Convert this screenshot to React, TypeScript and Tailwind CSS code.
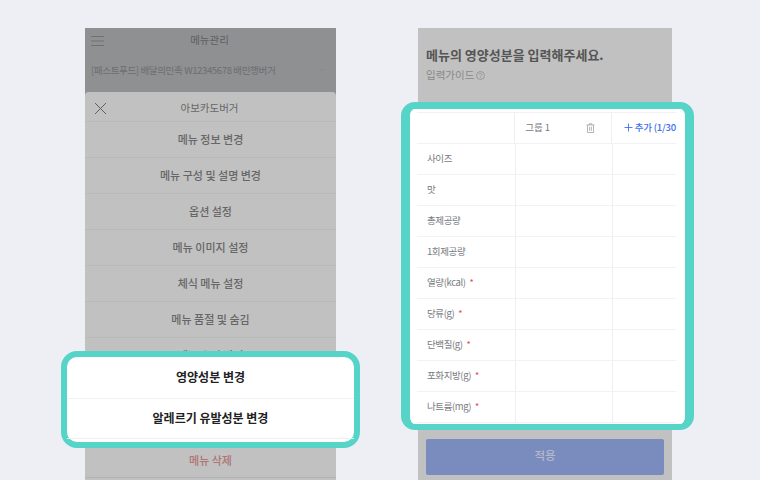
import React from "react";

const FONT = "font-['Noto_Sans_CJK_KR','Noto_Sans',sans-serif]";

const menuRows = [
  "메뉴 정보 변경",
  "메뉴 구성 및 설명 변경",
  "옵션 설정",
  "메뉴 이미지 설정",
  "체식 메뉴 설정",
  "메뉴 품절 및 숨김",
  "메뉴 순서 변경"
];

const nutritionRows = [
  { label: "사이즈" },
  { label: "맛" },
  { label: "총제공량" },
  { label: "1회제공량" },
  { label: "열량(kcal)", required: true },
  { label: "당류(g)", required: true },
  { label: "단백질(g)", required: true },
  { label: "포화지방(g)", required: true },
  { label: "나트륨(mg)", required: true }
];

function MenuPhone() {
  return (
    <div className="relative flex h-[452px] w-[251px] flex-col overflow-hidden bg-[#8f9092]">
      <div className="flex h-[64px] shrink-0 flex-col">
        <div className="flex h-[25px] items-center px-[6px]">
          <svg width="14" height="12" viewBox="0 0 14 12" stroke="#6f7072" strokeWidth="1">
            <path d="M0 1.5h13M0 6h13M0 10.5h13" />
          </svg>
          <span className="flex-1 pr-[16px] pb-[1px] text-center text-[10.5px] leading-none text-[#5e5f61]">메뉴관리</span>
        </div>
        <div className="flex flex-1 items-center justify-between pl-[6px] pr-[11px] pb-[5px] text-[9.5px] tracking-[-0.35px] text-[#6c6d6f]">
          <span>[패스트푸드] 배달의민족 W12345678 배민행버거</span>
          <svg width="6" height="4" viewBox="0 0 6 4" fill="none" stroke="#858688" strokeWidth="0.7">
            <path d="M0.5 0.5L3 3L5.5 0.5" />
          </svg>
        </div>
      </div>
      <div className="flex flex-1 flex-col rounded-t-[4px] bg-[#c1c1c1]">
        <div className="flex h-[30px] shrink-0 items-center border-b border-[#b9b9b9] pl-[9px] pt-[3px]">
          <svg width="13" height="13" viewBox="0 0 13 13" stroke="#5f5f5f" strokeWidth="1">
            <path d="M1 1l11 11M12 1L1 12" />
          </svg>
          <span className="flex-1 pr-[24px] text-center text-[10.5px] leading-none text-[#666666]">아보카도버거</span>
        </div>
        {menuRows.map(row => (
          <div
            key={row}
            className="flex h-[36px] shrink-0 items-center justify-center border-b border-[#b9b9b9] text-[11px] font-medium leading-none text-[#666666]"
          >
            {row}
          </div>
        ))}
        <div className="flex-1" />
        <div className="flex h-[36px] shrink-0 items-center justify-center border-b border-[#b3b3b3] pt-[2px] text-[11px] font-medium leading-none text-[#b07474]">
          메뉴 삭제
        </div>
        <div className="h-[2px] shrink-0" />
      </div>
    </div>
  );
}

function NutritionPhone() {
  return (
    <div className="flex h-[452px] w-[254px] flex-col bg-[#c1c1c1] px-[8px]">
      <div className="mt-[18px] text-[13px] font-bold leading-[18px] text-[#555555]">
        메뉴의 영양성분을 입력해주세요.
      </div>
      <div className="mt-[3px] flex items-center gap-[2px] text-[10.5px] leading-[16px] text-[#888888]">
        입력가이드
        <svg width="9" height="9" viewBox="0 0 10 10" fill="none" stroke="#888888" strokeWidth="0.8">
          <circle cx="5" cy="5" r="4.4" />
          <path d="M3.6 4c0-1.8 2.8-1.8 2.8 0 0 1-1.4 1-1.4 2M5 7v.8" />
        </svg>
      </div>
      <div className="flex-1" />
      <div className="mb-[5px] flex h-[36px] items-center justify-center rounded-[2px] bg-[#7a8bbd] pb-[3px] text-[11.5px] font-medium text-[#b4b9c9]">
        적용
      </div>
    </div>
  );
}

function NutritionTable() {
  return (
    <div className="h-full w-full bg-white pl-[7px] pr-[9px] pt-[3px]">
      <div className="flex h-[32px] border-y border-[#f1f1f6] text-[9.5px] text-[#777a80]">
        <div className="w-[99px] border-r border-[#eeeef3]" />
        <div className="flex w-[97px] items-center justify-between border-r border-[#eeeef3] pb-[1px] pl-[10px] pr-[16px]">
          <span>그룹 1</span>
          <svg width="9" height="10" viewBox="0 0 9 10" fill="none" stroke="#a0a2a6" strokeWidth="0.8">
            <path d="M0.5 2h8M3 2V.8h3V2M1.5 2v7.5h6V2M3.6 3.8v4M5.4 3.8v4" />
          </svg>
        </div>
        <div className="flex flex-1 items-center gap-[2px] whitespace-nowrap pb-[1px] pl-[12px] text-[9.5px] font-medium tracking-[-0.2px] text-[#3d6fee]">
          <svg width="9" height="9" viewBox="0 0 9 9" stroke="#3d6fee" strokeWidth="0.9">
            <path d="M4.5 0.5v8M0.5 4.5h8" />
          </svg>
          추가 (1/30
        </div>
      </div>
      {nutritionRows.map(row => (
        <div key={row.label} className="flex h-[31px] border-b border-[#f1f1f6]">
          <div className="flex w-[99px] items-center gap-[4px] border-r border-[#eeeef3] pb-[1px] pl-[10px] text-[9.5px] tracking-[-0.4px] text-[#777a80]">
            {row.label}
            {row.required && <span className="text-[9px] leading-none text-[#e5484d]">*</span>}
          </div>
          <div className="w-[97px] border-r border-[#eeeef3]" />
          <div className="flex-1" />
        </div>
      ))}
    </div>
  );
}

export default function App() {
  return (
    <div className={`relative h-[480px] w-[760px] overflow-hidden bg-[#eeeef5] ${FONT}`}>
      <div className="flex pl-[85px] pt-[28px]">
        <MenuPhone />
        <div className="ml-[82px]">
          <NutritionPhone />
        </div>
      </div>

      {/* highlight callouts sit over the dimmed phones */}
      <div className="absolute left-[61px] top-[351px] h-[97px] w-[299px] rounded-[16px] border-[6px] border-[#57d4c8] bg-white">
        <div className="flex h-[42px] items-center justify-center border-b border-[#f1f1f5] pb-[2px] text-[12px] font-bold text-[#222222]">
          영양성분 변경
        </div>
        <div className="flex h-[40px] items-center justify-center border-b border-[#eeeef3] pb-[2px] text-[12px] font-bold text-[#222222]">
          알레르기 유발성분 변경
        </div>
      </div>
      <div className="absolute left-[401px] top-[102px] h-[328px] w-[293px] overflow-hidden rounded-[14px] border-x-[9px] border-b-[6px] border-t-[7px] border-[#57d4c8]">
        <NutritionTable />
      </div>
    </div>
  );
}
